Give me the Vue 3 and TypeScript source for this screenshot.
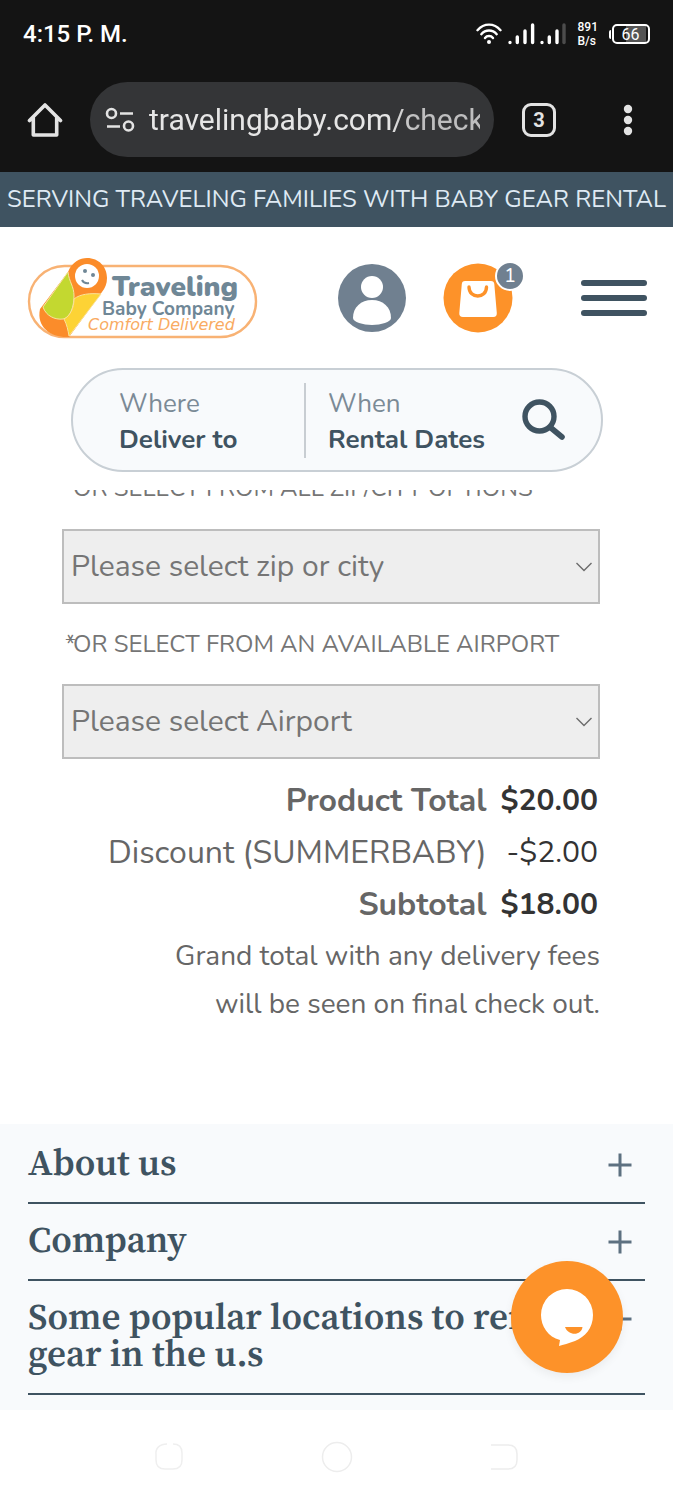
<script setup lang="ts">
import { ref } from 'vue'

interface Picker {
  id: string
  label: string
  placeholder: string
  required: boolean
  clipped: boolean
}

interface TotalRow {
  label: string
  value: string
  strong: boolean
}

const address = ref('travelingbaby.com/checkout')

const pickers: Picker[] = [
  { id: 'zip', label: 'OR SELECT FROM ALL ZIP/CITY OPTIONS', placeholder: 'Please select zip or city', required: false, clipped: true },
  { id: 'airport', label: 'OR SELECT FROM AN AVAILABLE AIRPORT', placeholder: 'Please select Airport', required: true, clipped: false },
]

const totals: TotalRow[] = [
  { label: 'Product Total', value: '$20.00', strong: true },
  { label: 'Discount (SUMMERBABY)', value: '-$2.00', strong: false },
  { label: 'Subtotal', value: '$18.00', strong: true },
]

const sections: string[] = ['About us', 'Company', 'Some popular locations to rent gear in the u.s']
</script>

<template>
  <div class="screen">
    <div class="chrome">
      <div class="status">
        <span class="clock">4:15 P. M.</span>
        <div class="indicators">
          <svg class="wifi" viewBox="0 0 26 22" fill="none" stroke="#fff" stroke-width="2.4" stroke-linecap="round">
            <path d="M1.5 7.2C8-.2 18-.2 24.500 7.200" />
            <path d="M5.300 11.200C9.500 6.200 16.500 6.200 20.700 11.200" />
            <path d="M9 15C11 12.400 15 12.400 17 15" />
            <circle cx="13" cy="19" r="2" fill="#fff" stroke="none" />
          </svg>
          <svg class="signal" viewBox="0 0 58 22" stroke-width="3.400" stroke-linecap="round" stroke="#fff">
            <path d="M2 19.500v.1M9.300 14v5.600M17 8v11.600M24.600 2v17.600M34 19.500v.1M41.300 14v5.600M49 8v11.600" />
            <path d="M56 2v17.600" stroke="#4c4c4c" />
          </svg>
          <span class="rate"><span>891</span><span>B/s</span></span>
          <span class="battery"><span class="cell">66</span></span>
        </div>
      </div>
      <div class="toolbar">
        <button class="tool" type="button" aria-label="Home">
          <svg class="home" viewBox="0 0 36 36" fill="none" stroke="#e3e3e3" stroke-width="3.600" stroke-linejoin="round" stroke-linecap="round">
            <path d="M2.500 18.500L18 3l15.500 15.500M6.300 16v17h23.400V16" />
          </svg>
        </button>
        <div class="omnibox">
          <svg class="tune" viewBox="0 0 30 26" fill="none" stroke="#e3e3e3" stroke-width="2.600">
            <circle cx="6.500" cy="6.500" r="4.500" />
            <path d="M15 6.500h13M2 19.500h13" />
            <circle cx="23.500" cy="19" r="4.500" />
          </svg>
          <input v-model="address" class="address" type="text" aria-label="Address" />
        </div>
        <button class="tabs" type="button" aria-label="Tabs">3</button>
        <button class="tool" type="button" aria-label="More options">
          <svg class="dots" viewBox="0 0 10 32" fill="#e3e3e3">
            <circle cx="5" cy="5" r="4.200" /><circle cx="5" cy="16" r="4.200" /><circle cx="5" cy="27" r="4.200" />
          </svg>
        </button>
      </div>
    </div>

    <div class="banner">SERVING TRAVELING FAMILIES WITH BABY GEAR RENTAL</div>

    <header class="site-header">
      <div class="brand-row">
        <a class="brand" href="#" aria-label="Traveling Baby Company">
          <svg viewBox="0 0 230 80">
            <rect x="1" y="8" width="227" height="71" rx="35.500" fill="#fff" stroke="#f8b274" stroke-width="2.400" />
            <path d="M40 14C44 4 52 0 59 0C71 0 79 9 79 20C79 26 77 30 74 34L41 79C24 80 8 70 12 51Z" fill="#fb8c2a" />
            <path d="M40 14L15 49C18 58 27 62 35 61C42 60 46 49 46 38C46 28 41 24 40 14Z" fill="#c3d830" stroke="#f6e5a0" stroke-width="1" />
            <path d="M46 41C52 36 62 35 73 36L41 78C40 72 39 67 36 61C42 58 46 50 46 41Z" fill="#fdd335" stroke="#fbe39a" stroke-width="1" />
            <circle cx="59" cy="18" r="12" fill="#fff" />
            <circle cx="57" cy="13" r="2" fill="#6f8796" />
            <circle cx="65" cy="17" r="2" fill="#6f8796" />
            <path d="M54 22q2 4 7 3" fill="none" stroke="#6f8796" stroke-width="2" />
            <text x="84" y="38" class="logo-main">Traveling</text>
            <text x="74" y="57" class="logo-sub">Baby Company</text>
            <text x="60" y="72" class="logo-tag">Comfort Delivered</text>
          </svg>
        </a>
        <button class="plain" type="button" aria-label="Account">
          <svg class="round-icon" viewBox="0 0 70 70">
            <circle cx="35" cy="35" r="34" fill="#708090" />
            <circle cx="35" cy="24" r="11" fill="#fff" />
            <path d="M16 55C16 44 24 37 35 37S54 44 54 55C54 59 44 62 35 62S16 59 16 55Z" fill="#fff" />
          </svg>
        </button>
        <button class="plain cart" type="button" aria-label="Cart, 1 item">
          <svg class="round-icon" viewBox="0 0 70 70">
            <circle cx="35" cy="35" r="34.500" fill="#fd9229" />
            <path d="M22 18h26q3 0 3.300 3l2.500 29q.2 4-3.500 4H20q-4 0-3.700-4l2.500-29q.2-3 3.200-3Z" fill="#fff" />
            <path d="M26 24c0 12 17.500 12 17.500 0" fill="none" stroke="#fd9229" stroke-width="3.400" stroke-linecap="round" />
          </svg>
          <span class="badge">1</span>
        </button>
        <button class="plain menu" type="button" aria-label="Menu"><span></span><span></span><span></span></button>
      </div>

      <div class="search">
        <button class="field where" type="button"><span class="hint">Where</span><strong>Deliver to</strong></button>
        <button class="field when" type="button"><span class="hint">When</span><strong>Rental Dates</strong></button>
        <button class="plain" type="button" aria-label="Search">
          <svg class="lens" viewBox="0 0 44 42" fill="none" stroke="#3f5361">
            <circle cx="17.500" cy="17.500" r="14.500" stroke-width="5.400" />
            <path d="M28.500 28.500L40 38" stroke-width="5.600" stroke-linecap="round" />
          </svg>
        </button>
      </div>
    </header>

    <main class="content">
      <template v-for="p in pickers" :key="p.id">
        <label class="picker-label" :class="{ clipped: p.clipped }" :for="p.id">
          <span v-if="p.required" class="star">*</span>{{ p.label }}
        </label>
        <div class="picker">
          <select :id="p.id"><option>{{ p.placeholder }}</option></select>
          <svg class="chevron" viewBox="0 0 18 10" fill="none" stroke="#6c6c6c" stroke-width="1.400"><path d="M1.500 1L9 8.500 16.500 1" /></svg>
        </div>
      </template>

      <table class="totals">
        <tbody>
          <tr v-for="t in totals" :key="t.label" :class="{ strong: t.strong }">
            <th scope="row">{{ t.label }}</th>
            <td>{{ t.value }}</td>
          </tr>
        </tbody>
      </table>
      <p class="note">Grand total with any delivery fees<br />will be seen on final check out.</p>
    </main>

    <footer class="footer">
      <button v-for="s in sections" :key="s" class="section" type="button" aria-expanded="false">
        <span class="section-title">{{ s }}</span>
        <svg class="plus" viewBox="0 0 24 24" stroke="#5d7080" stroke-width="3"><path d="M12 .5v23M.5 12h23" /></svg>
      </button>
    </footer>

    <nav class="system-nav" aria-label="System">
      <button class="plain" type="button" aria-label="Recent apps">
        <svg viewBox="0 0 32 32" fill="none" stroke="#efefef" stroke-width="1.500"><path d="M3 14C2 7 7 3 14 3M20 3q9 0 9 9v7q0 9-9 9h-8q-9 0-9-9v-5" /></svg>
      </button>
      <button class="plain" type="button" aria-label="Home screen">
        <svg viewBox="0 0 32 32" fill="none" stroke="#ededed" stroke-width="1.500"><circle cx="16" cy="16" r="14.500" /></svg>
      </button>
      <button class="plain" type="button" aria-label="Back">
        <svg viewBox="0 0 32 32" fill="none" stroke="#ededed" stroke-width="1.500"><path d="M3 4h17q9 0 9 9v6q0 9-9 9H3" /></svg>
      </button>
    </nav>

    <button class="chat" type="button" aria-label="Open chat">
      <svg viewBox="0 0 54 58">
        <path d="M27 1a26 26 0 0 1 26 26c0 13-8 22-18 26-6 2-12 4-16 5l1-6C8 49 1 38 1 27A26 26 0 0 1 27 1Z" fill="#fff" />
        <path d="M25 39h17.500c-1 9-14.500 9-17.500 0Z" fill="#fd9229" />
      </svg>
    </button>
  </div>
</template>

<style>
body {
  margin: 0;
  background: #fff;
}
</style>

<style scoped>
.screen {
  display: flex;
  flex-direction: column;
  font-family: Nunito, Lato, "Open Sans", sans-serif;
  color: #666;
}

button {
  border: 0;
  padding: 0;
  background: none;
  font-family: inherit;
  color: inherit;
  text-align: left;
}

svg {
  display: block;
}

.plain {
  flex: none;
}

/* Browser chrome */
.chrome {
  background: #141414;
  font-family: Roboto, sans-serif;
  color: #fff;
}

.status {
  display: flex;
  align-items: center;
  justify-content: space-between;
  height: 68px;
  padding: 0 23px;
}

.clock {
  font-size: 24px;
  font-weight: 500;
}

.indicators {
  display: flex;
  align-items: center;
}

.wifi {
  width: 26px;
  height: 22px;
  margin-right: 6px;
}

.signal {
  width: 58px;
  height: 22px;
}

.rate {
  display: flex;
  flex-direction: column;
  margin: 0 11px 0 12px;
  font-size: 12px;
  font-weight: 500;
  line-height: 14px;
}

.battery {
  display: flex;
  align-items: center;
}

.battery::before {
  content: "";
  width: 2px;
  height: 9px;
  margin-right: 1px;
  border-radius: 2px 0 0 2px;
  background: #fff;
}

.cell {
  box-sizing: border-box;
  width: 38px;
  height: 20px;
  border: 2px solid #fff;
  border-radius: 5px;
  padding-right: 1px;
  background: linear-gradient(90deg, #141414 35%, #555 35%, #555 94%, #141414 94%);
  font-size: 16px;
  line-height: 17px;
  text-align: center;
}

.toolbar {
  display: flex;
  align-items: center;
  height: 75px;
  padding: 14px 23px 15px 27px;
}

.home {
  width: 36px;
  height: 36px;
}

.omnibox {
  display: flex;
  flex: 1;
  align-items: center;
  min-width: 0;
  height: 75px;
  margin: 0 28px 0 27px;
  padding: 0 14px 0 15px;
  box-sizing: border-box;
  border-radius: 38px;
  background: #343537;
}

.tune {
  flex: none;
  width: 30px;
  height: 26px;
}

.address {
  flex: 1;
  min-width: 0;
  margin-left: 14px;
  padding: 0;
  border: 0;
  outline: 0;
  background: none;
  color: #e6e6e6;
  font: 400 30px/40px Roboto, sans-serif;
  mask-image: linear-gradient(90deg, #000 72%, rgba(0, 0, 0, 0.78) 80%);
}

.tabs {
  flex: none;
  box-sizing: border-box;
  width: 34px;
  height: 34px;
  margin-right: 67px;
  border: 3px solid #e3e3e3;
  border-radius: 9px;
  color: #e3e3e3;
  font-size: 20px;
  font-weight: 700;
  line-height: 28px;
  text-align: center;
}

.dots {
  width: 10px;
  height: 32px;
  margin-right: 17px;
}

/* Promo strip */
.banner {
  overflow: hidden;
  padding: 0 4px;
  background: #3f5361;
  color: #dfeaf4;
  font-size: 24px;
  line-height: 55px;
  text-align: center;
  white-space: nowrap;
}

/* Site header */
.site-header {
  padding: 31px 26px 18px 28px;
}

.brand-row {
  display: flex;
  align-items: center;
}

.brand {
  margin-right: auto;
}

.brand svg {
  width: 230px;
  height: 80px;
  overflow: visible;
}

.logo-main {
  fill: #6f8796;
  font-size: 28px;
  font-weight: 900;
}

.logo-sub {
  fill: #6f8796;
  font-size: 19px;
  font-weight: 700;
}

.logo-tag {
  fill: #f9ab62;
  font-family: "DejaVu Sans", sans-serif;
  font-size: 16px;
  font-style: italic;
}

.round-icon {
  width: 70px;
  height: 70px;
}

.cart {
  position: relative;
  margin: 0 68px 0 36px;
}

.badge {
  position: absolute;
  top: -2px;
  right: -12px;
  width: 26px;
  height: 26px;
  border: 2px solid #fff;
  border-radius: 50%;
  background: #708090;
  color: #fff;
  font-size: 20px;
  line-height: 26px;
  text-align: center;
}

.menu {
  display: flex;
  flex-direction: column;
  gap: 9px;
  width: 66px;
}

.menu span {
  height: 6px;
  border-radius: 3px;
  background: #3f5361;
}

.search {
  display: flex;
  align-items: center;
  box-sizing: border-box;
  height: 104px;
  margin: 30px 44px 0 43px;
  padding: 0 35px 0 46px;
  border: 2px solid #c8cfd5;
  border-radius: 52px;
  background: #f8fafc;
}

.field {
  display: flex;
  flex-direction: column;
  justify-content: center;
  height: 75px;
  padding-top: 3px;
  font-size: 26px;
  line-height: 36px;
  white-space: nowrap;
}

.hint {
  color: #7b8a96;
}

.field strong {
  color: #3f5361;
  font-weight: 700;
}

.where {
  flex: 1;
  border-right: 2px solid #c8cdd2;
}

.when {
  margin: 0 37px 0 22px;
}

.lens {
  width: 44px;
  height: 42px;
}

/* Delivery and totals */
.content {
  padding: 0 73px 96px 62px;
}

.picker-label {
  position: relative;
  display: block;
  padding-left: 11px;
  color: #757575;
  font-size: 24px;
  line-height: 80px;
  white-space: nowrap;
}

.picker-label.clipped {
  display: flex;
  align-items: flex-end;
  height: 7px;
  margin-bottom: 32px;
  overflow: hidden;
  line-height: 17px;
}

.star {
  position: absolute;
  left: 3px;
}

.picker {
  position: relative;
}

.picker select {
  display: block;
  box-sizing: border-box;
  width: 100%;
  height: 75px;
  padding: 0 40px 0 7px;
  border: 2px solid #bdbdbd;
  border-radius: 0;
  appearance: none;
  background: #eee;
  color: #757575;
  font-family: inherit;
  font-size: 30px;
}

.chevron {
  position: absolute;
  top: 33px;
  right: 7px;
  width: 18px;
  height: 10px;
  pointer-events: none;
}

.totals {
  margin: 16px 0 1px auto;
  border-collapse: collapse;
  font-size: 32px;
  line-height: 52px;
  text-align: right;
}

.totals th,
.totals td {
  padding: 0;
  font-weight: 400;
}

.totals th {
  text-align: right;
}

.totals td {
  padding: 0 2px 0 14px;
  color: #333;
  font-size: 30px;
}

.totals .strong th,
.totals .strong td {
  font-weight: 700;
}

.note {
  margin: 0;
  font-size: 28px;
  line-height: 48px;
  text-align: right;
}

/* Footer accordion */
.footer {
  padding: 3px 28px 15px;
  background: #f8fafc;
}

.section {
  display: flex;
  align-items: flex-start;
  justify-content: space-between;
  gap: 24px;
  width: 100%;
  padding: 17px 13px 21px 0;
  border-bottom: 2px solid #3f5361;
  color: #3f5361;
  font-family: "Source Serif 4", "Source Serif Pro", "Liberation Serif", serif;
  font-size: 37px;
  font-weight: 600;
  line-height: 37px;
}

.section-title {
  max-width: 536px;
}

.plus {
  flex: none;
  width: 24px;
  height: 24px;
  margin-top: 9px;
}

.system-nav {
  display: flex;
  align-items: center;
  justify-content: space-between;
  height: 86px;
  padding: 4px 153px 0;
}

.system-nav svg {
  width: 32px;
  height: 32px;
}

.chat {
  position: fixed;
  right: 50px;
  bottom: 127px;
  display: grid;
  place-items: center;
  width: 112px;
  height: 112px;
  border-radius: 50%;
  background: #fd9229;
  box-shadow: 0 4px 10px rgba(0, 0, 0, 0.06);
}

.chat svg {
  width: 54px;
  height: 58px;
}
</style>
